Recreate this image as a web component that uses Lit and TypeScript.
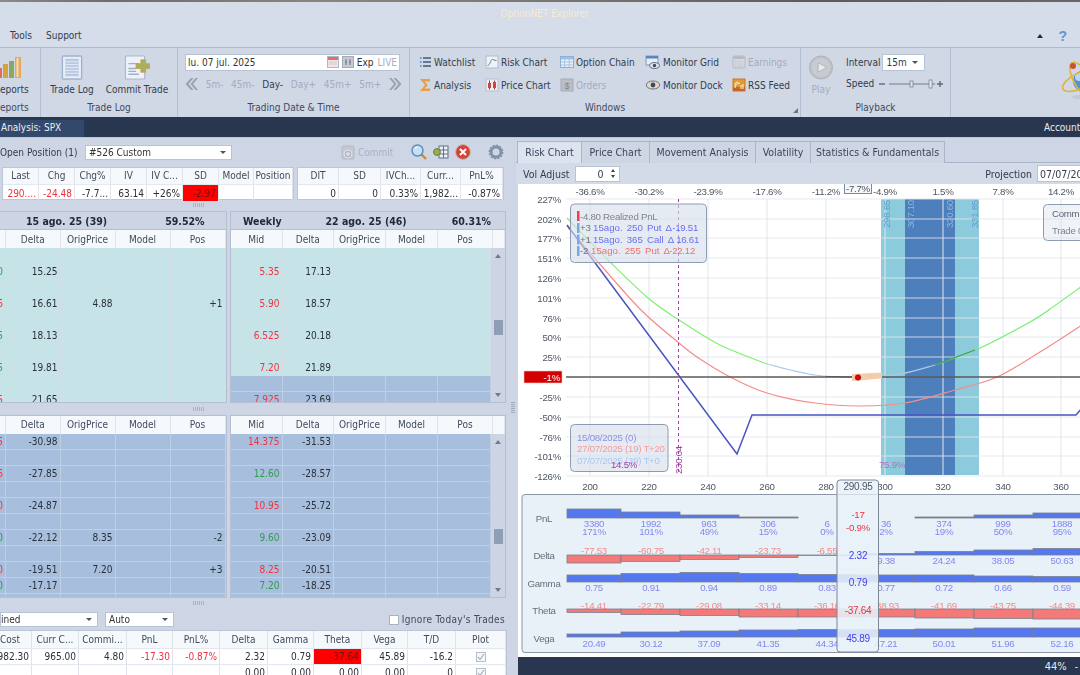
import { LitElement, html, css, svg } from "lit";
import { customElement } from "lit/decorators.js";

type Cell = string | { t: string; c?: string };
const R = (t: string) => ({ t, c: "red" });
const G = (t: string) => ({ t, c: "green" });
const cell = (v: Cell) => {
  const o = typeof v === "string" ? { t: v, c: "" } : v;
  return html`<div class="cell ${o.c ?? ""}">${o.t}</div>`;
};

const chk = html`<span class="chk"><svg viewBox="0 0 8 8" width="8" height="8"><path d="M1 4l2 2.5L7 1" fill="none" stroke="#8a94a5" stroke-width="1"/></svg></span>`;
const chevL = html`<svg width="14" height="14" viewBox="0 0 14 14"><path d="M7 1L1.5 7 7 13h2.5L4.5 7l5-6zM11.5 1L6.5 7l5 6H14L9 7l5-6z" fill="#9aa2ae"/></svg>`;
const chevR = html`<svg width="14" height="14" viewBox="0 0 14 14"><path d="M7 1l5.5 6L7 13H4.5l5-6-5-6zM2.5 1l5 6-5 6H0l5-6-5-6z" fill="#9aa2ae"/></svg>`;

const ico = {
  reports: html`<svg width="22" height="24" viewBox="0 0 22 24"><rect x="-3" y="12" width="5" height="10" fill="#e0705a"/><rect x="3" y="8" width="5" height="14" fill="#d8a040"/><rect x="9" y="5" width="5" height="17" fill="#8aa860"/><rect x="15" y="1" width="6" height="21" fill="#e8a860"/><rect x="16.5" y="2" width="2" height="19" fill="#f4dcb0"/></svg>`,
  log: html`<svg width="24" height="26" viewBox="0 0 24 26"><rect x="2" y="1" width="20" height="24" rx="1" fill="#e8eef7" stroke="#9fb2cf" stroke-width="1.4"/><rect x="5" y="4" width="14" height="18" fill="#b9c9e2"/><path d="M5 7h14M5 10h14M5 13h14M5 16h14M5 19h14" stroke="#e4ebf5" stroke-width="1"/></svg>`,
  commit: html`<svg width="26" height="26" viewBox="0 0 26 26"><rect x="1" y="1" width="20" height="24" rx="1" fill="#eef2f8" stroke="#a8b8ce" stroke-width="1.2"/><path d="M4 9h11M4 14h8M4 17h8M4 20h11" stroke="#9fb0c8" stroke-width="1.4"/><path d="M17 5h5v4h4v5h-4v4h-5v-4h-5V9h5z" fill="#a8b060" stroke="#c8a040" stroke-width=".8"/></svg>`,
  cal: html`<svg width="12" height="12" viewBox="0 0 12 12"><rect x=".5" y=".5" width="11" height="11" fill="#f6e4e4" stroke="#b0b8c8"/><rect x="1" y="1" width="10" height="3" fill="#e07070"/><path d="M2 6h8M2 8h8" stroke="#c8c8d8"/></svg>`,
  box: html`<svg width="12" height="12" viewBox="0 0 12 12"><rect x=".5" y=".5" width="11" height="11" fill="#c6cbd3" stroke="#a4abb7"/><path d="M4 3v6M8 3v6M3 6h2M7 6h2" stroke="#6f7682"/></svg>`,
  watch: html`<svg width="14" height="14" viewBox="0 0 14 14"><path d="M5 3h8M5 7h8M5 11h8" stroke="#44587a" stroke-width="1.3"/><path d="M2 3h1.5M2 7h1.5M2 11h1.5" stroke="#5a9be0" stroke-width="2"/></svg>`,
  risk: html`<svg width="14" height="14" viewBox="0 0 14 14"><rect x="1" y="1" width="12" height="12" fill="#eef1f6" stroke="#b0bac8"/><path d="M2.5 10.5c3 0 2.5-6 5-6 1.5 0 1.5 1 4 1" fill="none" stroke="#6b7c94"/></svg>`,
  sigma: html`<svg width="14" height="14" viewBox="0 0 14 14"><path d="M12 1H2l5 6-5 6h10v-2.4H6.5L10 7 6.5 3.4H12z" fill="#e8a048"/></svg>`,
  price: html`<svg width="14" height="14" viewBox="0 0 14 14"><rect x="1" y="1" width="12" height="12" fill="#f1eef2" stroke="#b8bcc8"/><path d="M4.5 2.5v9M9.5 2.5v9" stroke="#874050"/><rect x="3" y="5" width="3" height="5" fill="#c84848"/><rect x="8" y="4" width="3" height="6" fill="#c84848"/></svg>`,
  chain: html`<svg width="14" height="14" viewBox="0 0 14 14"><rect x=".5" y="1.5" width="13" height="11" fill="#eaf0f8" stroke="#8eb0d8"/><rect x="1" y="2" width="12" height="2.4" fill="#9cc0e8"/><path d="M1 7h12M1 10h12M4.7 4v8M9.2 4v8" stroke="#a9c2e0"/></svg>`,
  orders: html`<svg width="14" height="14" viewBox="0 0 14 14"><rect x="1" y="1" width="12" height="12" fill="#b9bec7" stroke="#a5abb5"/><text x="7" y="10.5" text-anchor="middle" font-size="9" fill="#7f8794" font-family="Liberation Sans">$</text></svg>`,
  grid: html`<svg width="16" height="14" viewBox="0 0 16 14"><rect x="1" y="1" width="12" height="9" fill="#e4ecf6" stroke="#7f9cc2"/><rect x="1" y="1" width="12" height="2.5" fill="#5b86bd"/><ellipse cx="9.5" cy="10.5" rx="5" ry="3" fill="#e2e6ec" stroke="#5d6a7e"/><circle cx="9.5" cy="10.5" r="1.7" fill="#3f4a5c"/></svg>`,
  eye: html`<svg width="16" height="14" viewBox="0 0 16 14"><ellipse cx="8" cy="7" rx="6.7" ry="4" fill="#e6d8c2" stroke="#6a7284"/><circle cx="8" cy="7" r="2.4" fill="#3e4a5e"/></svg>`,
  earn: html`<svg width="14" height="14" viewBox="0 0 14 14"><rect x="1" y="1" width="12" height="12" rx="1" fill="#d6d9df" stroke="#b4b9c2"/><rect x="1.5" y="1.5" width="11" height="2.4" fill="#b4b9c2"/><path d="M3 6.5h8M3 9h8M3 11.2h8" stroke="#bcc1ca" stroke-dasharray="1.5 .8"/></svg>`,
  rss: html`<svg width="14" height="14" viewBox="0 0 14 14"><rect x="1" y="1" width="12" height="12" fill="#e29a34" stroke="#c47c24"/><rect x="1" y="9" width="12" height="4" fill="#c8662a"/><path d="M3 10c0-3 2-5 5-5M3 7c0-2 1-3 3-3M9 11V7M11 11V6" stroke="#fff6e0" stroke-width="1" fill="none"/></svg>`,
  play: html`<svg width="26" height="26" viewBox="0 0 26 26"><circle cx="13" cy="13" r="12" fill="#bdc1c8" stroke="#aeb2ba"/><circle cx="13" cy="13" r="10" fill="#c8ccd2"/><path d="M10 8l9 5-9 5z" fill="#e8eaee" stroke="#b0b4ba"/></svg>`,
  slider: html`<svg width="64" height="10" viewBox="0 0 64 10"><path d="M0 5h6" stroke="#5f6b7c" stroke-width="1.4"/><path d="M10 5h46" stroke="#6f7a8a" stroke-width="1.2"/><rect x="31" y="2" width="3" height="6" fill="#dde3ec" stroke="#6f7a8a" stroke-width=".7"/><rect x="50" y="1" width="3" height="8" fill="#e8eaf0" stroke="#6f7a8a" stroke-width=".7"/><path d="M58 5h6M61 2v6" stroke="#5f6b7c" stroke-width="1.4"/></svg>`,
  atom: html`<svg width="44" height="46" viewBox="0 0 44 46"><ellipse cx="24" cy="24" rx="9" ry="10" fill="#4d93d9"/><ellipse cx="21" cy="20" rx="4" ry="4" fill="#b8d8f4"/><g fill="none" stroke="#dfb43a" stroke-width="1.6"><ellipse cx="24" cy="23" rx="8" ry="20" transform="rotate(-30 24 23)"/><ellipse cx="24" cy="23" rx="21" ry="8" transform="rotate(-25 24 23)"/></g><circle cx="15" cy="9" r="3" fill="#c9503a"/><ellipse cx="26" cy="40" rx="12" ry="2.5" fill="#c3cad6"/></svg>`,
  search: html`<svg width="18" height="18" viewBox="0 0 18 18"><path d="M11 11l5 5" stroke="#c08a44" stroke-width="2.4"/><circle cx="7.5" cy="7.5" r="5.5" fill="#c4e0f5" stroke="#5f88b8" stroke-width="1.4"/><path d="M5 5.5a3.5 3.5 0 012.5-1.3" stroke="#fff" fill="none"/></svg>`,
  colgear: html`<svg width="16" height="16" viewBox="0 0 16 16"><rect x="6" y="2" width="9" height="12" fill="#eef2f8" stroke="#5f7188"/><path d="M10.5 2v12M6 6h9M6 10h9" stroke="#5f7188"/><circle cx="4" cy="8" r="3.4" fill="#9aae4c" stroke="#6c7c34"/></svg>`,
  close: html`<svg width="16" height="16" viewBox="0 0 16 16"><circle cx="8" cy="8" r="7.4" fill="#d8403a" stroke="#bba"/><path d="M5 5l6 6M11 5l-6 6" stroke="#fff" stroke-width="2"/></svg>`,
  gear: html`<svg width="16" height="16" viewBox="0 0 16 16"><circle cx="8" cy="8" r="5" fill="none" stroke="#8391a5" stroke-width="3"/><circle cx="8" cy="8" r="6.6" fill="none" stroke="#8391a5" stroke-width="1.6" stroke-dasharray="2 1.45"/></svg>`,
  commitTool: html`<svg width="14" height="16" viewBox="0 0 14 16"><rect x="1" y="2" width="12" height="13" rx="1" fill="#c4c9d2" stroke="#b4b9c4"/><circle cx="7" cy="10" r="4" fill="#b4bac4" stroke="#dfe3ea"/><path d="M7 8v4M5 10h4" stroke="#eef0f4"/></svg>`,
};

const ribbonWin: [any, string, string][] = [
  [ico.watch, "Watchlist", ""], [ico.risk, "Risk Chart", ""], [ico.chain, "Option Chain", ""], [ico.grid, "Monitor Grid", ""], [ico.earn, "Earnings", "dis"],
  [ico.sigma, "Analysis", ""], [ico.price, "Price Chart", ""], [ico.orders, "Orders", "dis"], [ico.eye, "Monitor Dock", ""], [ico.rss, "RSS Feed", ""],
];

const e = ["", "", "", "", ""];
const g1a: Cell[][] = [e, [G("0"), "15.25", "", "", ""], e, [R("6"), "16.61", "4.88", "", "+1"], e, [G("5"), "18.13", "", "", ""], e, [G("5"), "19.81", "", "", ""], e, [R("5"), "21.65", "", "", ""]];
const g1b: Cell[][] = [e, [R("5.35"), "17.13", "", "", ""], e, [R("5.90"), "18.57", "", "", ""], e, [R("6.525"), "20.18", "", "", ""], e, [R("7.20"), "21.89", "", "", ""], e, [R("7.925"), "23.69", "", "", ""]];
const g2a: Cell[][] = [[R("5"), "-30.98", "", "", ""], e, [R("6"), "-27.85", "", "", ""], e, [R("0"), "-24.87", "", "", ""], e, [G("0"), "-22.12", "8.35", "", "-2"], e, [R("0"), "-19.51", "7.20", "", "+3"], [G("0"), "-17.17", "", "", ""], e];
const g2b: Cell[][] = [[R("14.375"), "-31.53", "", "", ""], e, [G("12.60"), "-28.57", "", "", ""], e, [R("10.95"), "-25.72", "", "", ""], e, [G("9.60"), "-23.09", "", "", ""], e, [R("8.25"), "-20.51", "", "", ""], [G("7.20"), "-18.25", "", "", ""], e];

const smooth = (p: number[][]) => {
  let d = `M${p[0][0]} ${p[0][1]}`;
  for (let i = 0; i < p.length - 1; i++) {
    const a = p[i - 1] ?? p[i], b = p[i], c = p[i + 1], f = p[i + 2] ?? c;
    d += `C${b[0] + (c[0] - a[0]) / 6} ${b[1] + (c[1] - a[1]) / 6} ${c[0] - (f[0] - b[0]) / 6} ${c[1] - (f[1] - b[1]) / 6} ${c[0]} ${c[1]}`;
  }
  return d;
};

const xs = [590, 649, 708, 767, 826, 885, 943, 1003, 1061];
const topL = ["-36.6%", "-30.2%", "-23.9%", "-17.6%", "-11.2%", "-4.9%", "1.5%", "7.8%", "14.2%"];
const botL = ["200", "220", "240", "260", "280", "300", "320", "340", "360"];
const yl: [string, number][] = [["227%", 199], ["202%", 219], ["177%", 238], ["151%", 258], ["126%", 278], ["101%", 298], ["76%", 318], ["50%", 337], ["25%", 357], ["-25%", 397], ["-50%", 417], ["-76%", 437], ["-101%", 456], ["-126%", 476]];

const edges = [567, 621, 680, 739, 798, 857, 915, 974, 1033, 1090];
const cx = [594, 651, 709, 768, 827, 886, 944, 1003, 1062];
const red = [
  [567, 226], [598, 262], [641, 310], [679, 343], [700, 359], [732, 378], [767, 393], [815, 403], [860, 406], [905, 403], [955, 390], [997, 377], [1040, 352], [1085, 323],
];
const green1 = [[567, 218], [610, 262], [648, 298], [679, 320], [720, 345], [767, 364]];
const pale = [[767, 364], [815, 375], [858, 377], [900, 374], [935, 365]];
const green2 = [[935, 365], [980, 348], [1030, 322], [1050, 309], [1085, 284]];

const rows = [
  { v: ["3380", "1992", "963", "306", "6", "36", "374", "999", "1888"], y: [509, 512, 515, 517, 518, 518, 517, 515, 513], base: 518 },
  { v: ["-77.53", "-60.75", "-42.11", "-23.73", "-6.55", "9.38", "24.24", "38.05", "50.63"], y: [563, 561.5, 559.5, 557.5, 555.5, 553.5, 551.5, 550, 548.5], base: 555 },
  { v: ["0.75", "0.91", "0.94", "0.89", "0.83", "0.77", "0.72", "0.66", "0.59"], y: [575, 573.5, 572.5, 573.5, 574.5, 575, 575, 576, 576.5], base: 582 },
  { v: ["-14.41", "-22.79", "-29.08", "-33.14", "-36.16", "-38.93", "-41.69", "-43.75", "-44.39"], y: [612.5, 614.5, 615.5, 617, 617, 617, 618, 618.5, 619], base: 609 },
  { v: ["20.49", "30.12", "37.09", "41.35", "44.34", "47.21", "50.01", "51.96", "52.16"], y: [634, 632, 631, 630, 629.5, 629.5, 629, 628, 628], base: 637 },
];
const pct = ["171%", "101%", "49%", "15%", "0%", "2%", "19%", "50%", "95%"];

const metricBars = () =>
  rows.map((r) =>
    r.v.map((val, i) => {
      const neg = val.startsWith("-");
      const x = edges[i], w = edges[i + 1] - x;
      const top = Math.min(r.y[i], r.base), h = Math.abs(r.y[i] - r.base);
      return svg`<rect x=${x} y=${top} width=${w} height=${h} class=${neg ? "bneg" : "bpos"}/>`;
    })
  );

@customElement("app-root")
export class AppRoot extends LitElement {
  static styles = css`
    :host { display: block; width: 1080px; height: 675px; overflow: hidden; position: relative;
      font: 10px "DejaVu Sans", "Liberation Sans", sans-serif; font-stretch: condensed; color: #333c4c; background: #ced6e5; }
    .page { width: 1080px; height: 675px; overflow: hidden; filter: blur(0.35px); }
    .strip { height: 2px; background: linear-gradient(90deg,#8a8a86,#6e6d6a 10%,#8b8580 30%,#77736f 55%,#5d5a58 75%,#6a6866); }
    .title { height: 25px; background: #d5dcea; text-align: center; padding-left: 9px; line-height: 24px; color: #f6eccb; box-sizing: border-box; }
    .menu { height: 20.5px; background: #d5dcea; border-bottom: 1px solid #afbccf; display: flex; align-items: center; box-sizing: border-box; padding-left: 10px; gap: 14px; padding-bottom: 2px; }
    .menu .sp { flex: 1; }
    .menu .caret { width: 0; height: 0; border: 3.5px solid transparent; border-top: 0; border-bottom: 4px solid #222b3a; }
    .help { color: #5f97cc; font: bold 14px "Liberation Sans", sans-serif; margin: 0 13px 0 1px; }

    .ribbon { height: 69.5px; background: #d0d8e6; display: flex; box-sizing: border-box; }
    .grp { display: flex; flex-direction: column; border-right: 1px solid #b2bfd2; box-sizing: border-box; flex: none; position: relative; }
    .grp .body { height: 53px; box-sizing: border-box; }
    .grp .lbl { height: 15px; text-align: center; line-height: 14px; color: #3f4a5e; }
    .g1 { width: 41px; overflow: hidden; }
    .g1 .body { padding-top: 8px; display: flex; flex-direction: column; }
    .g1 .t { margin-top: 4px; line-height: 12px; }
    .g1 .lbl { text-align: left; }
    .g2 { width: 137px; }
    .g2 .body { display: flex; padding: 7px 0 0 8px; gap: 9px; }
    .big { display: flex; flex-direction: column; align-items: center; gap: 4px; white-space: nowrap; line-height: 12px; }
    .big svg { height: 25px; }
    .w46 { width: 46px; } .w66 { width: 66px; } .w40 { width: 40px; }
    .g3 { width: 232px; }
    .g3 .body { padding: 6px 0 0 7px; }
    .date { width: 215px; height: 17px; background: #fff; border: 1px solid #b8c4d6; box-sizing: border-box; display: flex; align-items: center; padding: 0 2px; color: #333; gap: 3px; }
    .date .sp { flex: 1; }
    .live { color: #a6afbf; margin-left: 1px; }
    .steps { width: 219px; margin: 6px 0 0 -1px; display: flex; justify-content: space-between; align-items: center; height: 15px; color: #a2acbd; }
    .steps .on { color: #333c55; }
    .g4 { width: 391px; }
    .g4 .body { display: grid; grid-template-columns: 67px 75px 85px 87px 1fr; grid-auto-rows: 23px; padding: 3px 0 0 8px; }
    .wi { display: flex; align-items: center; gap: 2px; white-space: nowrap; }
    .wi svg { flex: none; }
    .wi.dis { color: #a2acbd; }
    .corner { position: absolute; right: 2px; bottom: 4px; width: 0; height: 0; border-left: 5px solid transparent; border-bottom: 5px solid #6a7486; }
    .g5 { width: 150px; }
    .g5 .body { display: flex; padding-top: 7px; }
    .g5 .big { color: #a2acbd; }
    .pb { margin-left: 5px; display: flex; flex-direction: column; }
    .pbr { display: flex; align-items: center; height: 16px; gap: 2px; }
    .pbr.sec { margin-top: 6px; height: 14px; gap: 5px; }
    .combo { width: 43px; height: 17px; background: #fff; border: 1px solid #b8c4d6; box-sizing: border-box; display: flex; align-items: center; justify-content: space-between; padding: 0 6px 0 3px; }
    .tri { width: 0; height: 0; border: 3px solid transparent; border-bottom: 0; border-top: 3px solid #4c5566; flex: none; }
    .g6 { flex: 1; border: 0; flex-direction: row; justify-content: flex-end; align-items: center; padding-bottom: 5px; }
    .g6 svg { margin-right: -22px; flex: none; }

    .dark { height: 20px; background: #28364f; display: flex; justify-content: space-between; color: #e8edf5; align-items: flex-end; }
    .atab { width: 84px; height: 17px; background: #33496b; padding-left: 1px; line-height: 16px; box-sizing: border-box; }
    .acct { width: 36px; overflow: hidden; line-height: 21px; height: 20px; white-space: nowrap; }

    .main { height: 538px; display: flex; border-top: 1.5px solid #c8cc98; box-sizing: border-box; }
    .left { width: 510px; flex: none; overflow: hidden; }
    .vs { width: 6px; flex: none; background: #ced6e5; display: flex; align-items: center; justify-content: center; }
    .vs i { width: 4px; height: 12px; background-image: repeating-linear-gradient(0deg,#9faabb 0 1px,transparent 1px 2px); }
    .right { flex: 1; display: flex; flex-direction: column; min-width: 0; }

    .tb { height: 28.5px; display: flex; align-items: center; white-space: nowrap; }
    .opn { width: 78px; flex: none; }
    .sel { background: #fff; border: 1px solid #b8c4d6; height: 15px; display: flex; align-items: center; justify-content: space-between; box-sizing: border-box; padding: 0 5px 0 3px; color: #333; }
    .sel.s1 { width: 147px; margin-left: 7px; flex: none; }
    .tool { display: flex; align-items: center; flex: none; }
    .commit { color: #a8b0bf; margin-left: 109px; gap: 3px; width: 54px; }
    .t1 { margin-left: 15px; } .t2 { margin-left: 5px; } .t3 { margin-left: 6px; } .t4 { margin-left: 17px; }

    .cell { display: flex; justify-content: flex-end; align-items: center; overflow: hidden; white-space: nowrap; padding-right: 2px; box-sizing: border-box; min-width: 0; color: #2b2f38; }
    .cell.red { color: #ee3340; }
    .cell.green { color: #2f9a50; }
    .cell.alert { background: #f00; color: #6a1414; }
    .cell.mid { justify-content: center; padding: 0; }

    .tblrow { height: 33px; display: flex; gap: 3px; padding-left: 2px; }
    .tbl { border: 1px solid #bcc6d6; background: #fff; box-sizing: border-box; height: 33px; }
    .tbl.a { width: 292px; } .tbl.b { width: 207px; }
    .r { display: grid; height: 16px; }
    .tbl .r.h { height: 17.5px; background: #f6f9fc; border-bottom: 1px solid #e3e8f0; box-sizing: border-box; }
    .tbl .r .cell { border-right: 1px solid #e0e5ed; }
    .ca { grid-template-columns: 36px 36px 36px 36px 36px 36px 35px 1fr; }
    .cb { grid-template-columns: 41px 42px 40px 40px 1fr; }
    .r.h .cell { justify-content: center; color: #3f4a5c; padding: 0; }

    .spl { height: 11.5px; display: flex; align-items: center; justify-content: center; padding-right: 112px; }
    .spl i { width: 12px; height: 4px; background-image: repeating-linear-gradient(90deg,#a9b3c4 0 1px,transparent 1px 2px); }
    .gridrow { display: flex; gap: 3.5px; }
    .gd { border: 1px solid #b4bfd1; border-left: 0; box-sizing: border-box; overflow: hidden; background: #cdd5e5; }
    .gd.l { width: 226.5px; } .gd.rr { width: 276px; border-left: 1px solid #b4bfd1; }
    .ghead { height: 18px; display: flex; align-items: center; font-weight: bold; color: #222a38; white-space: nowrap; border-bottom: 1px solid #b4bfd1; box-sizing: border-box; font-size: 10.5px; }
    .gh1 { margin-left: 26px; } .gh2 { margin-left: 58px; } .gh3 { margin-left: 12px; } .gh4 { margin-left: 44px; } .gh5 { margin-left: 45px; }
    .colh { height: 18px; background: #f6f9fc; }
    .colh .cell { border-right: 1px solid #e0e5ed; justify-content: center; color: #3f4a5c; padding: 0; }
    .cl { grid-template-columns: 6px 54.5px 55px 55px 1fr; }
    .cr { grid-template-columns: 51.5px 51.5px 52px 52px 55px 1fr; }
    .gbody { display: flex; overflow: hidden; }
    .b1 { height: 154px; } .b2 { height: 163px; }
    .rows { flex: 1; min-width: 0; overflow: hidden; }
    .cr5 { grid-template-columns: 51.5px 51.5px 52px 52px 1fr; }
    .r.d { border-bottom: 1px solid #d3dce7; box-sizing: border-box; }
    .r.d .cell { border-right: 1px solid #d3dce7; }
    .r.d.teal { background: #c6e3e8; }
    .r.d.blue { background: #a7bfdd; border-bottom-color: #bfd0e4; }
    .r.d.blue .cell { border-right-color: #bfd0e4; }
    .sb { width: 14px; flex: none; display: flex; flex-direction: column; align-items: center; background: #cdd5e5; }
    .sb .up { margin-top: 6px; width: 0; height: 0; border: 3.5px solid transparent; border-top: 0; border-bottom: 4px solid #707b8c; }
    .sb .dn { margin-bottom: 5px; width: 0; height: 0; border: 3.5px solid transparent; border-bottom: 0; border-top: 4px solid #707b8c; }
    .sb .trk { flex: 1; }
    .sb .th { width: 9px; height: 15px; background: #8d9eb5; }
    .sb1 .trk { padding-top: 62px; } .sb2 .trk { padding-top: 85px; }

    .ctrl { height: 21px; display: flex; align-items: center; }
    .sel.s2 { width: 98px; } .sel.s3 { width: 69px; margin-left: 7px; }
    .ined { margin-left: -3px; }
    .ign { margin-left: auto; margin-right: 5px; display: flex; align-items: center; gap: 3px; color: #3f4a5c; letter-spacing: .32px; white-space: nowrap; }
    .box { width: 8px; height: 8px; background: #fff; border: 1px solid #a9b3c4; }
    .bot { background: #fff; border: 1px solid #bcc6d6; border-left: 0; border-bottom: 0; width: 507px; height: 50px; box-sizing: border-box; }
    .ct { grid-template-columns: 32px 47px 48px 46px 47px 48px 46px 48px 46px 48px 1fr; }
    .bot .r.h { height: 17px; background: #f6f9fc; }
    .bot .r .cell { border-right: 1px solid #dfe4ec; }
    .bot .r.v { border-top: 1px solid #e3e8f0; box-sizing: border-box; height: 16px; }
    .bot .r.h .lc { justify-content: flex-start; }
    .chk { width: 8px; height: 8px; border: 1px solid #b7bfcc; background: #f5f6f8; display: block; }
    .chk svg { display: block; }

    .tabs { height: 25px; display: flex; padding: 2.5px 0 0 1px; box-sizing: border-box; border-bottom: 1px solid #a9b6ca; }
    .tab { height: 22px; flex: none; border: 1px solid #a9b6ca; border-bottom: 0; box-sizing: border-box; background: #ced6e4; display: flex; align-items: center; justify-content: center; border-left: 0; color: #3a4558; font-size: 10.5px; }
    .tab.on { background: #dde4f0; border-left: 1px solid #a9b6ca; }
    .t64 { width: 65px; } .t68 { width: 68px; } .t106 { width: 106px; } .t55 { width: 55px; } .t134 { width: 134px; }
    .opts { height: 21.5px; display: flex; align-items: center; background: #d3dbe9; padding-left: 7px; white-space: nowrap; font-size: 10.5px; }
    .num { width: 45px; height: 16px; background: #fff; border: 1px solid #b8c4d6; box-sizing: border-box; margin-left: 5px; display: flex; align-items: center; justify-content: flex-end; padding-right: 4px; gap: 7px; }
    .spin { display: flex; flex-direction: column; gap: 3px; }
    .spin i { width: 0; height: 0; border: 2.5px solid transparent; }
    .spin i:first-child { border-top: 0; border-bottom: 3px solid #444; }
    .spin i:last-child { border-bottom: 0; border-top: 3px solid #444; }
    .proj { margin-left: auto; display: flex; align-items: center; }
    .pd { width: 47px; height: 17px; background: #fff; border: 1px solid #b8c4d6; border-right: 0; box-sizing: border-box; margin-left: 5px; overflow: hidden; display: flex; align-items: center; padding-left: 2px; margin-right: -4px; }
    .cv { display: block; margin-left: 2px; flex: none; }
    .cv text { font: 9.7px "Liberation Sans", Arial, sans-serif; letter-spacing: -.28px; }
    .cv .ws { word-spacing: 1.4px; letter-spacing: 0; }
    .cv .big9 { font-size: 10px; }
    .axis { fill: #4f5662; }
    .grid { stroke: rgba(226,230,236,.85); stroke-width: 1.2; }
    .bpos { fill: #5577f0; stroke: #79808d; stroke-width: .8; }
    .bneg { fill: #f47a7a; stroke: #79808d; stroke-width: .8; }
    .tpos { fill: #8088f5; } .tneg { fill: #f58a8a; }
    .foot { height: 18px; margin-left: 2px; background: #28364f; color: #e6ebf3; display: flex; justify-content: flex-end; align-items: center; padding-right: 10px; box-sizing: border-box; }
    .foot b { font-weight: normal; font-size: 11px; }
    .foot s { text-decoration: none; margin-left: 8px; margin-right: -8px; }
  `;

  chart() {
    const ln = (d: string, c: string, w = 1.2) => svg`<path d=${d} fill="none" stroke=${c} stroke-width=${w}/>`;
    return svg`<svg class="cv" width="562" height="473" viewBox="518 184 562 473">
      <rect x="518" y="184" width="562" height="473" fill="#fff"/>
      <rect x="881" y="199" width="98" height="276" fill="#8ccbdb"/>
      <rect x="905" y="199" width="50" height="276" fill="#4e7fbd"/>
      ${xs.map((x) => svg`<line x1=${x} x2=${x} y1="199" y2="476" class="grid"/>`)}
      ${[199, 219, 238, 258, 278, 298, 318, 337, 357, 397, 417, 437, 456, 476].map((y) => svg`<line x1="566" x2="1080" y1=${y} y2=${y} class="grid"/>`)}
      ${xs.map((x, i) => svg`<text x=${x} y="195" text-anchor="middle" class="axis">${topL[i]}</text>`)}
      ${xs.map((x, i) => svg`<text x=${x} y="490" text-anchor="middle" class="axis">${botL[i]}</text>`)}
      ${yl.map(([t, y]) => svg`<text x="561" y=${y + 3.5} text-anchor="end" class="axis">${t}</text>`)}
      <rect x="844.5" y="183.5" width="27" height="10" fill="#f4f6fa" stroke="#7a8aa0"/>
      <text x="858" y="192" text-anchor="middle" class="axis">-7.7%</text>
      <text transform="translate(890 228) rotate(-90)" fill="#5f9ecf">298.85</text>
      <text transform="translate(914 228) rotate(-90)" fill="#8db8dc">307.10</text>
      <text transform="translate(953 228) rotate(-90)" fill="#8db8dc">320.60</text>
      <text transform="translate(978 228) rotate(-90)" fill="#5f9ecf">331.85</text>
      ${ln(smooth(red), "#f58c8c")}
      ${ln(smooth(green1), "#80f070")}
      ${ln(smooth(pale), "#a9c9f0")}
      ${ln("M826 376.5L858 377", "#4a5a78")}
      ${ln(smooth(green2), "#70ee70")}
      ${ln("M935 365L975 350", "#3aa050")}
      ${ln("M566 377H1080", "#5a5a5a", 1.3)}
      ${ln("M567 225L737 454L752 415H1076L1082 408", "#4a55c0", 1.5)}
      <line x1="678.5" x2="678.5" y1="199" y2="475" stroke="#a040a8" stroke-dasharray="3 3"/>
      <path d="M852 374L882 372.5V378.5L852 381Z" fill="#f3cdaa"/>
      <circle cx="858" cy="377.5" r="2.8" fill="#e00" stroke="#622" stroke-width=".6"/>
      <rect x="524" y="371" width="38" height="12" fill="#d40000" stroke="#f4c4c4" stroke-width=".6"/>
      <text x="560" y="380.5" text-anchor="end" fill="#fff">-1%</text>
      <text transform="translate(682 474) rotate(-90)" fill="#a040a8">230.04</text>
      <text x="879" y="468" fill="#b070c0">75.9%</text>

      <rect x="570.5" y="204" width="136" height="58.5" rx="4" fill="rgba(214,222,235,.62)" stroke="#8e9cb2"/>
      <rect x="577" y="211" width="2.5" height="10" fill="#f04050"/>
      <rect x="577" y="223" width="2.5" height="10" fill="#7aa8e0"/>
      <rect x="577" y="234.5" width="2.5" height="10" fill="#7aa8e0"/>
      <rect x="577" y="246" width="2.5" height="10" fill="#7aa8e0"/>
      <text x="580" y="219.5" fill="#80848c">-4.80 Realized PnL</text>
      <text x="580" y="231" fill="#70747c">+3</text><text x="593" y="231" class="ws" fill="#6a70f0">15ago. 250 Put Δ</text><text x="698" y="231" text-anchor="end" fill="#6a70f0">-19.51</text>
      <text x="580" y="242.5" fill="#70747c">+1</text><text x="593" y="242.5" class="ws" fill="#6a70f0">15ago. 365 Call Δ</text><text x="699" y="242.5" text-anchor="end" fill="#6a70f0">16.61</text>
      <text x="580" y="254" fill="#70747c">-2</text><text x="591" y="254" class="ws" fill="#f07070">15ago. 255 Put Δ</text><text x="695" y="254" text-anchor="end" fill="#f07070">-22.12</text>

      <rect x="570.5" y="424.5" width="97.5" height="47" rx="4" fill="rgba(214,222,235,.62)" stroke="#8e9cb2"/>
      <text x="577" y="440.5" fill="#8a92e0">15/08/2025 (0)</text>
      <text x="577" y="452" fill="#f59a9a">27/07/2025 (19) T+20</text>
      <text x="577" y="463.5" fill="#a9c8f0">07/07/2025 (39) T+0</text>
      <text x="611" y="468" fill="#a040a8">14.5%</text>

      <rect x="1043.5" y="204.5" width="50" height="36" rx="4" fill="rgba(214,222,235,.4)" stroke="#8e9cb2"/>
      <text x="1052" y="216.5" fill="#5a6472">Comm</text>
      <text x="1052" y="234" fill="#7a8492">Trade 0</text>

      <rect x="522" y="494.5" width="570" height="158" rx="3" fill="#e8f0f8" stroke="#8a95a5"/>
      ${["PnL", "Delta", "Gamma", "Theta", "Vega"].map((t, i) => svg`<text x="544" y=${[521.5, 558.5, 586.5, 613.5, 641.5][i]} text-anchor="middle" fill="#666e7c">${t}</text>`)}
      ${metricBars()}
      ${rows[0].v.map((v, i) => svg`<text x=${cx[i]} y="526.5" text-anchor="middle" class="tpos">${v}</text><text x=${cx[i]} y="535" text-anchor="middle" class="tpos">${pct[i]}</text>`)}
      ${rows.slice(1).map((r, k) => r.v.map((v, i) => {
        const neg = v.startsWith("-");
        const y = [neg ? 554 : 563.5, 591, 609, 646.5][k];
        return svg`<text x=${cx[i]} y=${y} text-anchor="middle" class=${neg ? "tneg" : "tpos"}>${v}</text>`;
      }))}

      <rect x="837" y="480" width="41.5" height="172" rx="3" fill="rgba(232,240,248,.88)" stroke="#7c8796"/>
      <path d="M837 494.5H878" stroke="#c8d0da" stroke-width=".6"/>
      <text x="858" y="489.5" text-anchor="middle" class="axis big9">290.95</text>
      <text x="858" y="518" text-anchor="middle" fill="#ee3344">-17</text>
      <text x="858" y="531" text-anchor="middle" fill="#ee3344">-0.9%</text>
      <text x="858" y="558.5" text-anchor="middle" fill="#4040ee" class="big9">2.32</text>
      <text x="858" y="585.5" text-anchor="middle" fill="#4040ee" class="big9">0.79</text>
      <text x="858" y="614" text-anchor="middle" fill="#ee3344" class="big9">-37.64</text>
      <text x="858" y="641.5" text-anchor="middle" fill="#4040ee" class="big9">45.89</text>
    </svg>`;
  }

  gridRows(data: Cell[][], cls: string, isBlue: (i: number) => boolean) {
    return data.map((r, i) => html`<div class="r d ${cls} ${isBlue(i) ? "blue" : "teal"}">${r.map(cell)}</div>`);
  }

  render() {
    const scroll = (c: string) => html`<div class="sb ${c}"><div class="up"></div><div class="trk"><div class="th"></div></div><div class="dn"></div></div>`;
    return html`<div class="page">
      <div class="strip"></div>
      <div class="title">OptionNET Explorer</div>
      <div class="menu"><span>Tools</span><span>Support</span><span class="sp"></span><span class="caret"></span><span class="help">?</span></div>
      <div class="ribbon">
        <div class="grp g1"><div class="body">${ico.reports}<div class="t">eports</div></div><div class="lbl">eports</div></div>
        <div class="grp g2">
          <div class="body"><div class="big w46">${ico.log}Trade Log</div><div class="big w66">${ico.commit}Commit Trade</div></div>
          <div class="lbl">Trade Log</div>
        </div>
        <div class="grp g3">
          <div class="body">
            <div class="date">lu. 07 jul. 2025<span class="sp"></span>${ico.cal}${ico.box}<span>Exp</span><span class="live">LIVE</span></div>
            <div class="steps">${chevL}<span>5m-</span><span>45m-</span><span class="on">Day-</span><span>Day+</span><span>45m+</span><span>5m+</span>${chevR}</div>
          </div>
          <div class="lbl">Trading Date &amp; Time</div>
        </div>
        <div class="grp g4">
          <div class="body">${ribbonWin.map(([i, t, c]) => html`<div class="wi ${c}">${i}<span>${t}</span></div>`)}</div>
          <div class="lbl">Windows</div><span class="corner"></span>
        </div>
        <div class="grp g5">
          <div class="body">
            <div class="big w40">${ico.play}Play</div>
            <div class="pb">
              <div class="pbr">Interval<div class="combo">15m<span class="tri"></span></div></div>
              <div class="pbr sec">Speed${ico.slider}</div>
            </div>
          </div>
          <div class="lbl">Playback</div>
        </div>
        <div class="grp g6">${ico.atom}</div>
      </div>
      <div class="dark"><div class="atab">Analysis: SPX</div><div class="acct">Account</div></div>
      <div class="main">
        <div class="left">
          <div class="tb">
            <span class="opn">Open Position (1)</span>
            <div class="sel s1">#526 Custom<span class="tri"></span></div>
            <div class="tool commit">${ico.commitTool}Commit</div>
            <div class="tool t1">${ico.search}</div><div class="tool t2">${ico.colgear}</div><div class="tool t3">${ico.close}</div><div class="tool t4">${ico.gear}</div>
          </div>
          <div class="tblrow">
            <div class="tbl a">
              <div class="r h ca">${["Last", "Chg", "Chg%", "IV", "IV C...", "SD", "Model", "Position"].map(cell)}</div>
              <div class="r ca">${cell(R("290...."))}${cell(R("-24.48"))}${cell("-7.7...")}${cell("63.14")}${cell("+26%")}${cell({ t: "-2.97", c: "alert" })}${cell("")}${cell("")}</div>
            </div>
            <div class="tbl b">
              <div class="r h cb">${["DIT", "SD", "IVCh...", "Curr...", "PnL%"].map(cell)}</div>
              <div class="r cb">${["0", "0", "0.33%", "1,982...", "-0.87%"].map(cell)}</div>
            </div>
          </div>
          <div class="spl"><i></i></div>
          <div class="gridrow">
            <div class="gd l">
              <div class="ghead"><span class="gh1">15 ago. 25 (39)</span><span class="gh2">59.52%</span></div>
              <div class="r colh cl">${["", "Delta", "OrigPrice", "Model", "Pos"].map(cell)}</div>
              <div class="rows b1">${this.gridRows(g1a, "cl", () => false)}</div>
            </div>
            <div class="gd rr">
              <div class="ghead"><span class="gh3">Weekly</span><span class="gh4">22 ago. 25 (46)</span><span class="gh5">60.31%</span></div>
              <div class="r colh cr">${["Mid", "Delta", "OrigPrice", "Model", "Pos", ""].map(cell)}</div>
              <div class="gbody b1"><div class="rows">${this.gridRows(g1b, "cr5", (i) => i >= 8)}</div>${scroll("sb1")}</div>
            </div>
          </div>
          <div class="spl"><i></i></div>
          <div class="gridrow">
            <div class="gd l">
              <div class="r colh cl">${["", "Delta", "OrigPrice", "Model", "Pos"].map(cell)}</div>
              <div class="rows b2">${this.gridRows(g2a, "cl", () => true)}</div>
            </div>
            <div class="gd rr">
              <div class="r colh cr">${["Mid", "Delta", "OrigPrice", "Model", "Pos", ""].map(cell)}</div>
              <div class="gbody b2"><div class="rows">${this.gridRows(g2b, "cr5", () => true)}</div>${scroll("sb2")}</div>
            </div>
          </div>
          <div class="spl"><i></i></div>
          <div class="ctrl">
            <div class="sel s2"><span class="ined">ined</span><span class="tri"></span></div>
            <div class="sel s3">Auto<span class="tri"></span></div>
            <div class="ign"><span class="box"></span>Ignore Today's Trades</div>
          </div>
          <div class="bot">
            <div class="r h ct">${cell({ t: "Cost", c: "lc" })}${["Curr C...", "Commi...", "PnL", "PnL%", "Delta", "Gamma", "Theta", "Vega", "T/D", "Plot"].map(cell)}</div>
            <div class="r v ct">${cell("982.30")}${cell("965.00")}${cell("4.80")}${cell(R("-17.30"))}${cell(R("-0.87%"))}${cell("2.32")}${cell("0.79")}${cell({ t: "-37.64", c: "alert" })}${cell("45.89")}${cell("-16.2")}<div class="cell mid">${chk}</div></div>
            <div class="r v ct">${cell("")}${cell("")}${cell("")}${cell("")}${cell("")}${cell("0.00")}${cell("0.00")}${cell("0.00")}${cell("0.00")}${cell("0")}<div class="cell mid">${chk}</div></div>
          </div>
        </div>
        <div class="vs"><i></i></div>
        <div class="right">
          <div class="tabs">
            <div class="tab on t64">Risk Chart</div><div class="tab t68">Price Chart</div><div class="tab t106">Movement Analysis</div><div class="tab t55">Volatility</div><div class="tab t134">Statistics &amp; Fundamentals</div>
          </div>
          <div class="opts">Vol Adjust<div class="num">0<span class="spin"><i></i><i></i></span></div>
            <div class="proj">Projection<div class="pd">07/07/2025</div></div>
          </div>
          ${this.chart()}
          <div class="foot"><b>44%</b><s>-</s></div>
        </div>
      </div>
    </div>`;
  }
}
